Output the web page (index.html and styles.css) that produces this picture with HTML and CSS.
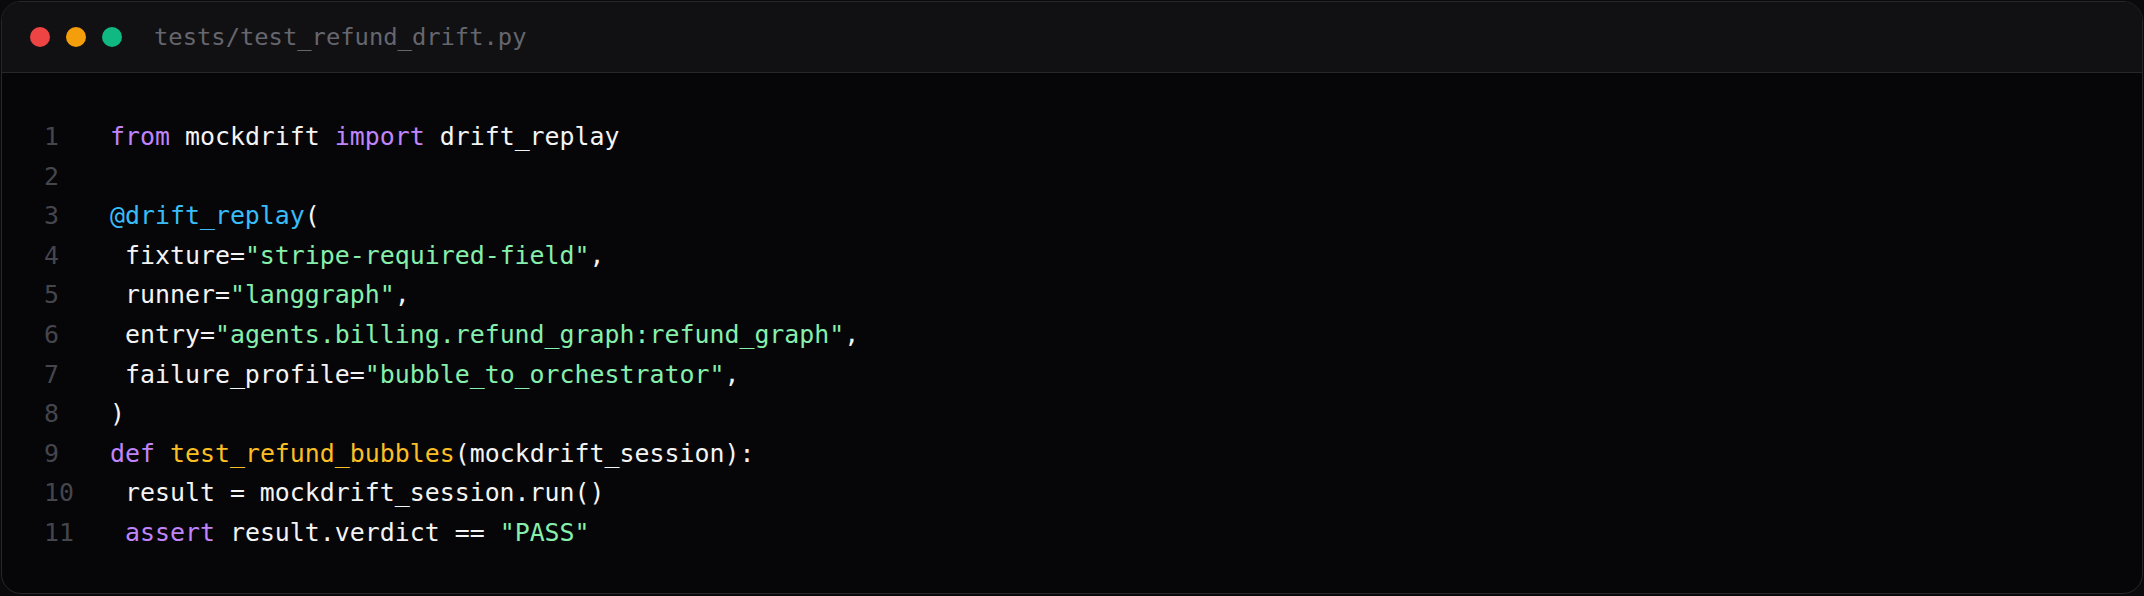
FILE: index.html
```html
<!DOCTYPE html>
<html lang="en">
<head>
<meta charset="utf-8">
<title>tests/test_refund_drift.py</title>
<link rel="stylesheet" href="styles.css">
</head>
<body>
<div class="window">
  <div class="titlebar">
    <span class="dot dot-red"></span>
    <span class="dot dot-amber"></span>
    <span class="dot dot-green"></span>
    <span class="title">tests/test_refund_drift.py</span>
  </div>
  <div class="code">
    <div class="line"><span class="ln">1</span><span class="src"><span class="kw">from</span> mockdrift <span class="kw">import</span> drift_replay</span></div>
    <div class="line"><span class="ln">2</span><span class="src"></span></div>
    <div class="line"><span class="ln">3</span><span class="src"><span class="deco">@drift_replay</span>(</span></div>
    <div class="line"><span class="ln">4</span><span class="src"> fixture=<span class="str">"stripe-required-field"</span>,</span></div>
    <div class="line"><span class="ln">5</span><span class="src"> runner=<span class="str">"langgraph"</span>,</span></div>
    <div class="line"><span class="ln">6</span><span class="src"> entry=<span class="str">"agents.billing.refund_graph:refund_graph"</span>,</span></div>
    <div class="line"><span class="ln">7</span><span class="src"> failure_profile=<span class="str">"bubble_to_orchestrator"</span>,</span></div>
    <div class="line"><span class="ln">8</span><span class="src">)</span></div>
    <div class="line"><span class="ln">9</span><span class="src"><span class="kw">def</span> <span class="fn">test_refund_bubbles</span>(mockdrift_session):</span></div>
    <div class="line"><span class="ln">10</span><span class="src"> result = mockdrift_session.run()</span></div>
    <div class="line"><span class="ln">11</span><span class="src"> <span class="kw">assert</span> result.verdict == <span class="str">"PASS"</span></span></div>
  </div>
</div>
</body>
</html>
```
FILE: styles.css
```css
html, body {
  margin: 0;
  padding: 0;
  background: #0a0a0c;
}

body {
  padding: 1px;
  width: 2144px;
  height: 596px;
  box-sizing: border-box;
  overflow: hidden;
}

.window {
  border: 1px solid #27272a;
  border-radius: 20px;
  background: #060608;
  overflow: hidden;
  font-family: "DejaVu Sans Mono", "Liberation Mono", monospace;
}

.titlebar {
  display: flex;
  align-items: center;
  gap: 16px;
  height: 70px;
  padding: 0 28px;
  background: #111113;
  border-bottom: 1px solid #27272a;
}

.dot {
  width: 20px;
  height: 20px;
  border-radius: 50%;
  flex: none;
}

.dot-red { background: #ef4444; }
.dot-amber { background: #f59e0b; }
.dot-green { background: #10b981; }

.title {
  margin-left: 16px;
  font-size: 23.8px;
  color: #66666e;
}

.code {
  padding: 44px 0 40px 42px;
  font-size: 24.9px;
  line-height: 39.6px;
  color: #f4f4f5;
}

.line {
  display: grid;
  grid-template-columns: 66px 1fr;
  height: 39.6px;
}

.ln {
  color: #45454d;
}

.src {
  white-space: pre;
}

.kw { color: #c084fc; }
.deco { color: #38bdf8; }
.str { color: #86efac; }
.fn { color: #fbbf24; }
```
